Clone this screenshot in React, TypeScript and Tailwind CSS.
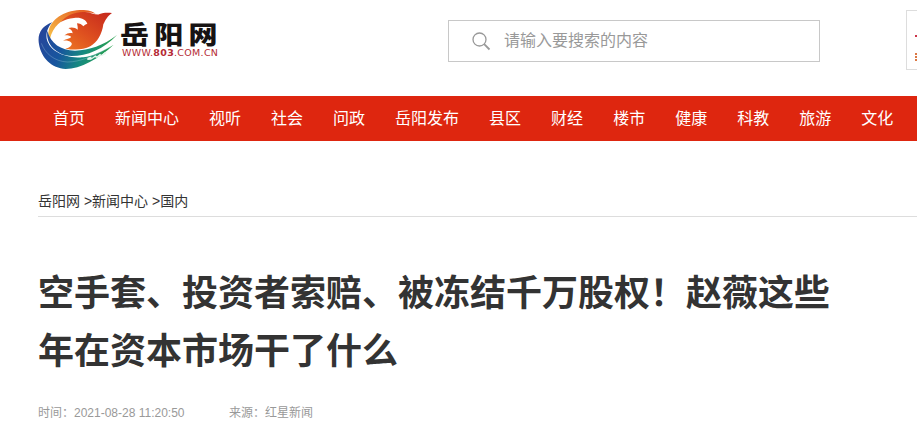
const nav = ['首页', '新闻中心', '视听', '社会', '问政', '岳阳发布', '县区', '财经', '楼市', '健康', '科教', '旅游', '文化'];

function Emblem() {
  return (
    <svg className="h-[62px] w-[84px] shrink-0" viewBox="24 24 252 186" aria-hidden="true">
      <defs>
        <linearGradient id="bird" x1="0" y1="1" x2="1" y2="0">
          <stop offset="0" stopColor="#ee7a24" />
          <stop offset="0.45" stopColor="#de4f1f" />
          <stop offset="1" stopColor="#c4261c" />
        </linearGradient>
        <linearGradient id="arc" x1="0" y1="1" x2="1" y2="0">
          <stop offset="0" stopColor="#f8c34a" />
          <stop offset="1" stopColor="#e2541e" />
        </linearGradient>
        <linearGradient id="wave" gradientUnits="userSpaceOnUse" x1="30" y1="90" x2="240" y2="170">
          <stop offset="0" stopColor="#27459a" />
          <stop offset="0.35" stopColor="#17559e" />
          <stop offset="0.65" stopColor="#168a80" />
          <stop offset="1" stopColor="#2ba34a" />
        </linearGradient>
      </defs>
      <path d="M56 92C63 60 100 32 149 30C171 29 188 34 197 41C175 35 151 37 126 48C96 58 68 80 60 116C54 110 54 100 56 92Z" fill="url(#arc)" />
      <path d="M92 66C110 44 140 34 165 36C185 38 200 47 209 42C219 38 232 37 246 39C232 49 227 59 220 73C216 103 202 127 181 139C159 151 130 150 106 146C119 143 129 134 124 128C117 122 110 121 98 122C110 117 120 115 124 111C119 106 112 105 103 106C112 99 120 97 128 100C127 92 122 87 115 84C126 80 136 83 143 89C144 82 142 76 141 70C149 70 155 73 160 79C164 74 169 71 172 72C168 58 152 51 132 54C117 55 106 60 92 66Z" fill="url(#bird)" />
      <path d="M67 67C35 78 21 102 27 133C34 174 65 205 107 207C151 207 208 175 251 134C222 152 190 168 160 172C110 174 60 158 50 116C47 98 55 79 67 67Z" fill="url(#wave)" />
      <path d="M52 92C46 132 80 166 125 168C171 168 221 148 261 105C219 137 178 151 135 152C92 151 62 130 52 92Z" fill="url(#wave)" />
      <path d="M34 130C46 162 74 184 112 186C150 186 192 168 238 142" fill="none" stroke="#a4cfdf" strokeWidth="1" />
      <path d="M172 174l9-4 5 3 10-7 5 3 9-8 5 4 9-8 6 0-3 5-11 6-5-1-10 7-6-2-12 7-11 1z" fill="#e5f5ed" />
    </svg>
  );
}

export default function App() {
  return (
    <div className="h-[428px] w-full overflow-hidden bg-white font-['Liberation_Sans','Noto_Sans_CJK_SC',sans-serif]">
      <header className="flex h-24 items-start pl-[38px]">
        <div className="flex w-[410px] shrink-0 pt-2">
          <Emblem />
          <div className="-ml-0.5 pt-[11px]">
            <div className="flex h-7 w-[84px] origin-left scale-x-[1.16] items-center justify-between whitespace-nowrap font-['Noto_Sans_CJK_SC',sans-serif] text-[25px] font-black leading-7 text-[#171313]">
              <span>岳</span><span>阳</span><span>网</span>
            </div>
            <div className="ml-0.5 h-3 whitespace-nowrap font-['DejaVu_Sans',sans-serif] text-[9.5px] leading-3 tracking-[0.3px] text-[#b52b35]">
              WWW.<b>803</b>.COM.CN
            </div>
          </div>
        </div>
        <label className="mt-5 flex h-[42px] w-[372px] shrink-0 items-center border border-[#c8c8c8] pl-[23px] text-[#999]">
          <svg className="h-[19px] w-[19px]" viewBox="0 0 19 19" fill="none" stroke="currentColor" aria-hidden="true">
            <circle cx="7.5" cy="7.5" r="6.5" strokeWidth="1.3" />
            <path d="M12.2 12.2L17.5 17.5" strokeWidth="1.8" />
          </svg>
          <span className="ml-[13px] text-base leading-5">请输入要搜索的内容</span>
        </label>
        <div className="ml-[86px] mt-2.5 h-[60px] w-[60px] shrink-0 border border-[#ddd] pl-2 pt-6">
          <div className="h-0.5 w-3 bg-[#cc3348]" />
          <div className="mt-4 h-2 w-3 border-l-2 border-dotted border-[#dc7844]" />
        </div>
      </header>

      <nav className="flex h-[45px] items-center gap-[30px] bg-[#de260f] pl-[53px] text-base text-white">
        {nav.map((n) => <a key={n} className="shrink-0 whitespace-nowrap leading-6">{n}</a>)}
      </nav>

      <main className="pl-[38px]">
        <div className="mt-[46px] h-[30px] whitespace-nowrap border-b border-[#ddd] text-sm leading-7 text-[#333]">
          岳阳网 &gt;新闻中心 &gt;国内
        </div>
        <h1 className="mt-12 w-[800px] text-4xl font-bold leading-[58px] text-[#333]">
          空手套、投资者索赔、被冻结千万股权！赵薇这些年在资本市场干了什么
        </h1>
        <div className="mt-[22px] flex text-xs leading-5 text-[#999]">
          <span className="w-[191px]">时间：2021-08-28 11:20:50</span>
          <span>来源：红星新闻</span>
        </div>
      </main>
    </div>
  );
}
